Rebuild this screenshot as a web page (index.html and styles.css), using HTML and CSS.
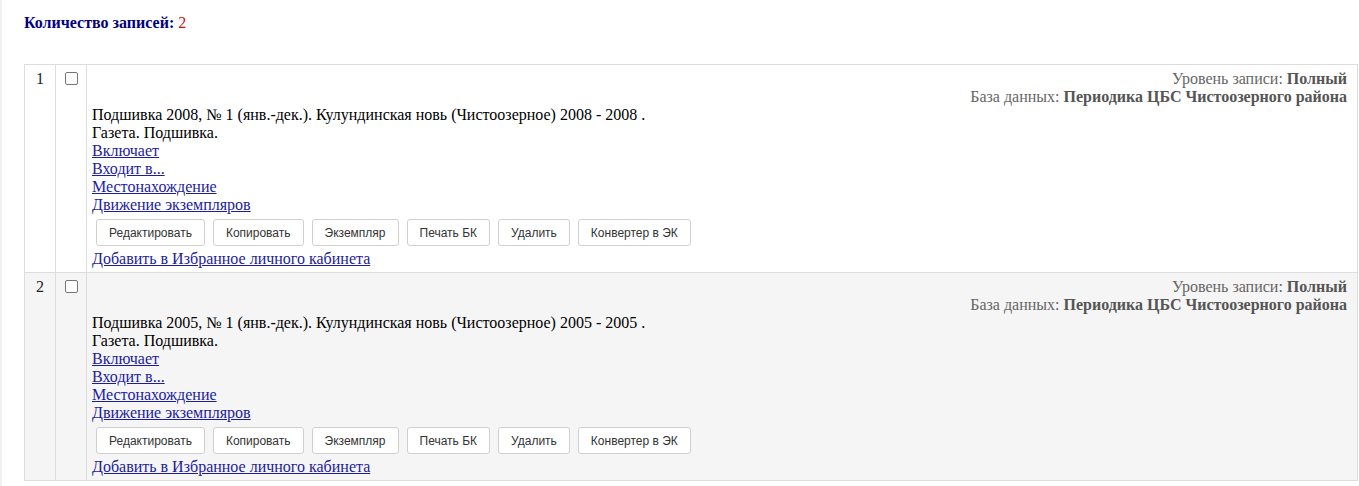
FILE: index.html
```html
<!DOCTYPE html>
<html lang="ru">
<head>
<meta charset="utf-8">
<link rel="stylesheet" href="styles.css">
</head>
<body>
<div class="page">
  <div class="count"><b>Количество записей:</b> <span class="num">2</span></div>
  <table class="records">
    <tr class="rec">
      <td class="no">1</td>
      <td class="chk"><span class="box"></span></td>
      <td class="body">
        <div class="meta">
          <div>Уровень записи: <b>Полный</b></div>
          <div>База данных: <b>Периодика ЦБС Чистоозерного района</b></div>
        </div>
        <div class="desc">Подшивка 2008, № 1 (янв.-дек.). Кулундинская новь (Чистоозерное) 2008 - 2008 .</div>
        <div class="desc">Газета. Подшивка.</div>
        <div><a href="#">Включает</a></div>
        <div><a href="#">Входит в...</a></div>
        <div><a href="#">Местонахождение</a></div>
        <div><a href="#">Движение экземпляров</a></div>
        <div class="btns">
          <button class="btn">Редактировать</button>
          <button class="btn">Копировать</button>
          <button class="btn">Экземпляр</button>
          <button class="btn">Печать БК</button>
          <button class="btn">Удалить</button>
          <button class="btn">Конвертер в ЭК</button>
        </div>
        <div><a href="#">Добавить в Избранное личного кабинета</a></div>
      </td>
    </tr>
    <tr class="rec alt">
      <td class="no">2</td>
      <td class="chk"><span class="box"></span></td>
      <td class="body">
        <div class="meta">
          <div>Уровень записи: <b>Полный</b></div>
          <div>База данных: <b>Периодика ЦБС Чистоозерного района</b></div>
        </div>
        <div class="desc">Подшивка 2005, № 1 (янв.-дек.). Кулундинская новь (Чистоозерное) 2005 - 2005 .</div>
        <div class="desc">Газета. Подшивка.</div>
        <div><a href="#">Включает</a></div>
        <div><a href="#">Входит в...</a></div>
        <div><a href="#">Местонахождение</a></div>
        <div><a href="#">Движение экземпляров</a></div>
        <div class="btns">
          <button class="btn">Редактировать</button>
          <button class="btn">Копировать</button>
          <button class="btn">Экземпляр</button>
          <button class="btn">Печать БК</button>
          <button class="btn">Удалить</button>
          <button class="btn">Конвертер в ЭК</button>
        </div>
        <div><a href="#">Добавить в Избранное личного кабинета</a></div>
      </td>
    </tr>
  </table>
</div>
</body>
</html>
```

FILE: styles.css
```css
html, body {
  margin: 0;
  padding: 0;
  background: #fff;
}
body {
  font-family: "Liberation Serif", "Times New Roman", serif;
  font-size: 16px;
  line-height: 18px;
  color: #000;
}
.page {
  border-left: 2px solid #f0f0f0;
  padding: 14px 0 0 22px;
  min-height: 486px;
  box-sizing: border-box;
}
.count {
  color: #000080;
  line-height: 18px;
  margin-bottom: 32px;
}
.count .num {
  color: #cc1111;
}
.records {
  border-collapse: collapse;
  width: 1334px;
}
.records td {
  border: 1px solid #dddddd;
  vertical-align: top;
  padding: 5px 5px 4px 5px;
}
.records td.body {
  padding-right: 10px;
}
.rec.alt td {
  background: #f5f5f5;
}
.no {
  width: 20px;
  text-align: center;
  color: #222;
}
.chk {
  width: 20px;
  text-align: center;
}
.box {
  display: inline-block;
  width: 11px;
  height: 11px;
  border: 1px solid #767676;
  border-radius: 2px;
  background: #fff;
  margin-top: 2px;
}
.meta {
  text-align: right;
  color: #666;
}
.meta b {
  color: #555;
}
a {
  color: #1c1c9c;
  text-decoration: underline;
}
.btns {
  display: flex;
  gap: 8px;
  padding: 5px 0 4px 4px;
}
.btn {
  font-family: "Liberation Sans", Arial, sans-serif;
  font-size: 12px;
  color: #333;
  background: #fff;
  border: 1px solid #d0d0d0;
  border-radius: 3px;
  height: 27px;
  padding: 0 12px;
  margin: 0;
}
```
